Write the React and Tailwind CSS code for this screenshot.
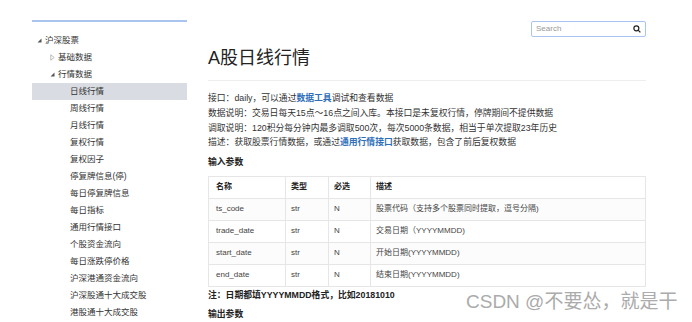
import React from "react";

const FONT = "font-['Liberation_Sans','Noto_Sans_CJK_SC',sans-serif]";

function Down() {
  return (
    <svg width="5" height="5" viewBox="0 0 5 5" className="shrink-0">
      <polygon points="4.5,0.5 4.5,4.5 0.5,4.5" fill="#555" />
    </svg>
  );
}
function Right() {
  return (
    <svg width="5" height="7" viewBox="0 0 5 7" className="shrink-0">
      <polygon points="0.8,0.8 4.2,3.5 0.8,6.2" fill="none" stroke="#aaa" strokeWidth="0.8" />
    </svg>
  );
}

const leaves = [
  "日线行情",
  "周线行情",
  "月线行情",
  "复权行情",
  "复权因子",
  "停复牌信息(停)",
  "每日停复牌信息",
  "每日指标",
  "通用行情接口",
  "个股资金流向",
  "每日涨跌停价格",
  "沪深港通资金流向",
  "沪深股通十大成交股",
  "港股通十大成交股",
];

const rows = [
  ["ts_code", "str", "N", "股票代码（支持多个股票同时提取，逗号分隔)"],
  ["trade_date", "str", "N", "交易日期（YYYYMMDD)"],
  ["start_date", "str", "N", "开始日期(YYYYMMDD)"],
  ["end_date", "str", "N", "结束日期(YYYYMMDD)"],
];

export default function App() {
  return (
    <div className={`${FONT} relative w-[692px] h-[322px] overflow-hidden bg-white flex text-[#333]`}>
      {/* Sidebar */}
      <div className="ml-[32px] w-[155px] pt-[20px] shrink-0">
        <div className="h-[1.5px] bg-[#a9c4ef]" />
        <div className="mt-[10.5px] text-[8.5px]">
          <div className="h-[17px] flex items-center pl-[5px] gap-[3px]">
            <Down />
            <span>沪深股票</span>
          </div>
          <div className="h-[17px] flex items-center pl-[18px] gap-[3px]">
            <Right />
            <span>基础数据</span>
          </div>
          <div className="h-[17px] flex items-center pl-[18px] gap-[3px]">
            <Down />
            <span>行情数据</span>
          </div>
          {leaves.map((t, i) => (
            <div
              key={t}
              className={`h-[17px] flex items-center pl-[38px] ${i === 0 ? "bg-[#d9dce2]" : ""}`}
            >
              {t}
            </div>
          ))}
        </div>
      </div>

      {/* Main */}
      <div className="ml-[21px] w-[438px] shrink-0">
        <div className="pt-[21px] flex justify-end">
          <div className="w-[115px] h-[16px] border border-[#a9c4ef] rounded-[2px] flex items-center justify-between pl-[4px] pr-[4px]">
            <span className="text-[8px] text-[#999]">Search</span>
            <svg width="8" height="8" viewBox="0 0 10 10">
              <circle cx="4.2" cy="4.2" r="3.1" fill="none" stroke="#222" strokeWidth="1.5" />
              <line x1="6.4" y1="6.4" x2="9.2" y2="9.2" stroke="#222" strokeWidth="1.6" />
            </svg>
          </div>
        </div>
        <div className="mt-[9px] h-[24px] leading-[24px] text-[18px] text-[#222]">A股日线行情</div>
        <div className="mt-[10px] border-t border-[#eeeeee]" />
        <div className="mt-[10px] text-[8.8px] leading-[14.8px] whitespace-nowrap">
          <div>
            接口：daily，可以通过<span className="font-bold text-[#2f6fba]">数据工具</span>调试和查看数据
          </div>
          <div>数据说明：交易日每天15点～16点之间入库。本接口是未复权行情，停牌期间不提供数据</div>
          <div>调取说明：120积分每分钟内最多调取500次，每次5000条数据，相当于单次提取23年历史</div>
          <div>
            描述：获取股票行情数据，或通过<span className="font-bold text-[#2f6fba]">通用行情接口</span>获取数据，包含了前后复权数据
          </div>
        </div>
        <div className="mt-[5px] text-[8.8px] leading-[15px] font-bold text-[#222]">输入参数</div>
        <table className="mt-[5.5px] w-[438px] border-collapse text-[8px] text-[#444]">
          <thead>
            <tr className="h-[22px]">
              <th className="border border-[#e6e6e6] text-left font-bold pl-[7px] w-[77px] text-[#222]">名称</th>
              <th className="border border-[#e6e6e6] text-left font-bold pl-[5px] w-[43px] text-[#222]">类型</th>
              <th className="border border-[#e6e6e6] text-left font-bold pl-[5px] w-[42px] text-[#222]">必选</th>
              <th className="border border-[#e6e6e6] text-left font-bold pl-[5px] text-[#222]">描述</th>
            </tr>
          </thead>
          <tbody>
            {rows.map((r, i) => (
              <tr key={r[0]} className={`h-[22px] ${i % 2 === 0 ? "bg-[#fcfcfc]" : "bg-white"}`}>
                <td className="border border-[#e6e6e6] pl-[7px]">{r[0]}</td>
                <td className="border border-[#e6e6e6] pl-[5px]">{r[1]}</td>
                <td className="border border-[#e6e6e6] pl-[5px]">{r[2]}</td>
                <td className="border border-[#e6e6e6] pl-[5px]">{r[3]}</td>
              </tr>
            ))}
          </tbody>
        </table>
        <div className="mt-[1px] text-[8.8px] leading-[14px] font-bold text-[#222]">注：日期都填YYYYMMDD格式，比如20181010</div>
        <div className="mt-[5px] text-[8.8px] leading-[14px] font-bold text-[#222]">输出参数</div>
      </div>

      <div className="absolute left-[466px] top-[289px] text-[19px] leading-[25px] text-[#ababab] whitespace-nowrap">
        CSDN @不要怂，就是干
      </div>
    </div>
  );
}
